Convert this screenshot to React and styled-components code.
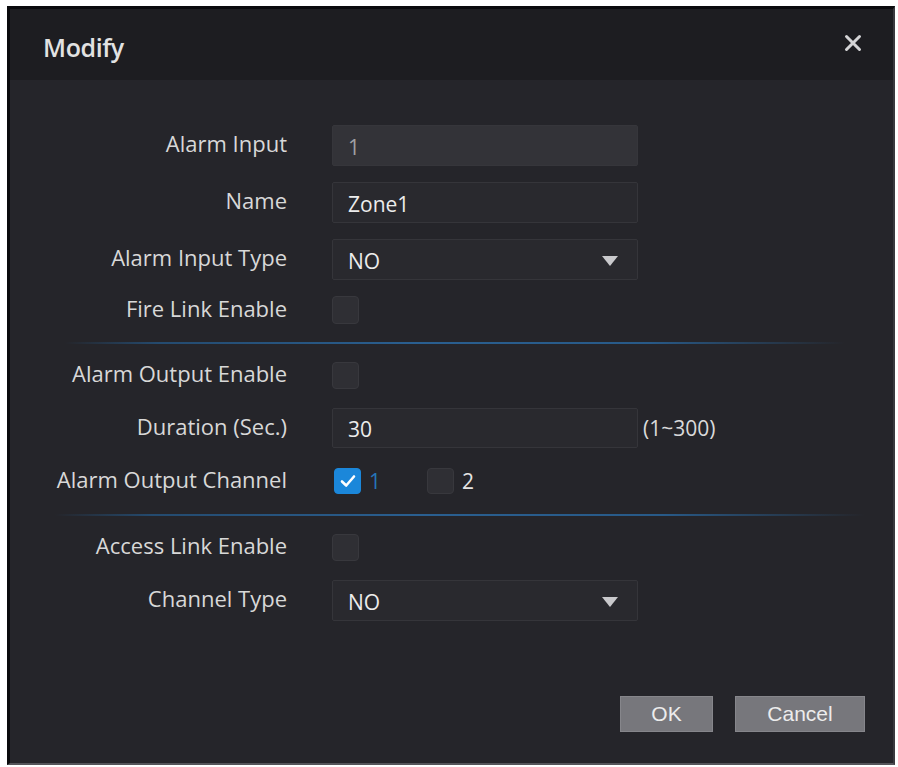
import React from "react";
import styled, { createGlobalStyle } from "styled-components";

const Global = createGlobalStyle`
  html, body { margin: 0; padding: 0; background: #ffffff; }
  body { font-family: "Open Sans", "Liberation Sans", sans-serif; }
  * { box-sizing: border-box; }
`;

const Page = styled.div`
  width: 898px;
  height: 767px;
  padding: 6px 3px 2px 7px;
  background: #ffffff;
`;

const Dialog = styled.div`
  width: 100%;
  height: 100%;
  display: flex;
  flex-direction: column;
  background: #25252a;
  border-left: 3px solid #0b0b0d;
  border-top: 3px solid #0b0b0d;
  border-right: 2px solid #3a3a3f;
  border-bottom: 2px solid #55555a;
`;

const Header = styled.div`
  height: 71px;
  flex: none;
  display: flex;
  align-items: center;
  justify-content: space-between;
  padding: 0 30px 0 33px;
  background: #1d1d21;
`;

const Title = styled.div`
  font-size: 25px;
  color: #e2e2e2;
  font-weight: 600;
  letter-spacing: -0.4px;
  margin-top: 4px;
`;

const Close = styled.button`
  border: 0;
  background: none;
  padding: 0;
  width: 20px;
  height: 20px;
  display: flex;
  align-items: center;
  justify-content: center;
  margin-top: -4px;
  cursor: pointer;
`;

const Body = styled.div`
  flex: 1;
  display: flex;
  flex-direction: column;
  padding: 45px 28px 31px 0;
`;

const Section = styled.div`
  display: flex;
  flex-direction: column;
  gap: ${(p) => p.$gap}px;
`;

const Row = styled.div`
  display: grid;
  grid-template-columns: 277px 1fr;
  column-gap: 45px;
  align-items: center;
`;

const Label = styled.div`
  text-align: right;
  font-size: 22px;
  font-weight: 500;
  color: #d8d8d8;
  white-space: nowrap;
  letter-spacing: 0;
  margin-top: -5px;
`;

const Control = styled.div`
  display: flex;
  align-items: center;
  gap: 5px;
`;

const Field = styled.div`
  width: 306px;
  height: ${(p) => p.$h || 41}px;
  display: flex;
  align-items: center;
  justify-content: space-between;
  padding: 2px 19px 0 15px;
  background: ${(p) => (p.$disabled ? "#333338" : "#29292e")};
  border: 1px solid ${(p) => (p.$disabled ? "#36363b" : "#35353a")};
  border-radius: 2px;
  font-size: 21px;
  font-weight: 500;
  color: ${(p) => (p.$disabled ? "#a0a0a4" : "#ececec")};
`;

const Hint = styled.span`
  font-size: 21px;
  font-weight: 500;
  color: #dadada;
`;

const Box = styled.span`
  width: 27px;
  height: ${(p) => p.$h || 27}px;
  border-radius: 4px;
  display: inline-flex;
  align-items: center;
  justify-content: center;
  background: ${(p) => (p.$checked ? "#1b87da" : "#2f2f34")};
  border: 1px solid ${(p) => (p.$checked ? "#1b87da" : "#38383d")};
  flex: none;
`;

const CheckGroup = styled.div`
  display: flex;
  align-items: center;
  gap: 46px;
  padding-left: 2px;
`;

const CheckItem = styled.label`
  display: flex;
  align-items: center;
  gap: 8px;
  font-size: 21px;
  font-weight: 500;
  color: ${(p) => (p.$checked ? "#2676b8" : "#e4e4e4")};
`;

const Separator = styled.div`
  height: 2px;
  margin: ${(p) => p.$m};
  background: linear-gradient(
    to right,
    rgba(40, 90, 140, 0) 0%,
    rgba(36, 84, 128, 0.8) 12%,
    #2a5f90 45%,
    #285a88 75%,
    rgba(40, 90, 140, 0) 100%
  );
`;

const Footer = styled.div`
  margin-top: auto;
  display: flex;
  justify-content: flex-end;
  gap: 22px;
`;

const Button = styled.button`
  width: ${(p) => p.$w}px;
  height: 36px;
  border: 1px solid #86868b;
  background: #77777c;
  color: #ececec;
  font-family: "Liberation Sans", Arial, sans-serif;
  font-size: 21px;
  padding: 0;
  cursor: pointer;
`;

const Arrow = () => (
  <svg width="16" height="10" viewBox="0 0 16 10">
    <path d="M0 0 H16 L8 10 Z" fill="#c9c9cc" />
  </svg>
);

const Check = () => (
  <svg width="16" height="14" viewBox="0 0 16 14">
    <path d="M2 7.5 L6.2 11.5 L14 2.5" fill="none" stroke="#ffffff" strokeWidth="2.6" strokeLinecap="round" strokeLinejoin="round" />
  </svg>
);

const CloseIcon = () => (
  <svg width="18" height="18" viewBox="0 0 18 18">
    <path d="M2.5 2.5 L15.5 15.5 M15.5 2.5 L2.5 15.5" stroke="#d4d4d6" strokeWidth="3" strokeLinecap="round" />
  </svg>
);

export default function App() {
  return (
    <>
      <Global />
      <Page>
        <Dialog>
          <Header>
            <Title>Modify</Title>
            <Close aria-label="close">
              <CloseIcon />
            </Close>
          </Header>
          <Body>
            <Section $gap={16}>
              <Row>
                <Label>Alarm Input</Label>
                <Control>
                  <Field $disabled>1</Field>
                </Control>
              </Row>
              <Row>
                <Label>Name</Label>
                <Control>
                  <Field>Zone1</Field>
                </Control>
              </Row>
              <Row>
                <Label>Alarm Input Type</Label>
                <Control>
                  <Field>
                    <span>NO</span>
                    <Arrow />
                  </Field>
                </Control>
              </Row>
              <Row>
                <Label>Fire Link Enable</Label>
                <Control>
                  <Box $h={28} />
                </Control>
              </Row>
            </Section>
            <Separator $m="18px 20px 18px 55px" />
            <Section $gap={19}>
              <Row>
                <Label>Alarm Output Enable</Label>
                <Control>
                  <Box />
                </Control>
              </Row>
              <Row>
                <Label>Duration (Sec.)</Label>
                <Control>
                  <Field $h={40}>30</Field>
                  <Hint>(1~300)</Hint>
                </Control>
              </Row>
              <Row>
                <Label>Alarm Output Channel</Label>
                <CheckGroup>
                  <CheckItem $checked>
                    <Box $checked $h={26}>
                      <Check />
                    </Box>
                    1
                  </CheckItem>
                  <CheckItem>
                    <Box $h={26} />
                    2
                  </CheckItem>
                </CheckGroup>
              </Row>
            </Section>
            <Separator $m="19px 0 18px 45px" />
            <Section $gap={19}>
              <Row>
                <Label>Access Link Enable</Label>
                <Control>
                  <Box />
                </Control>
              </Row>
              <Row>
                <Label>Channel Type</Label>
                <Control>
                  <Field>
                    <span>NO</span>
                    <Arrow />
                  </Field>
                </Control>
              </Row>
            </Section>
            <Footer>
              <Button $w={93}>OK</Button>
              <Button $w={130}>Cancel</Button>
            </Footer>
          </Body>
        </Dialog>
      </Page>
    </>
  );
}
